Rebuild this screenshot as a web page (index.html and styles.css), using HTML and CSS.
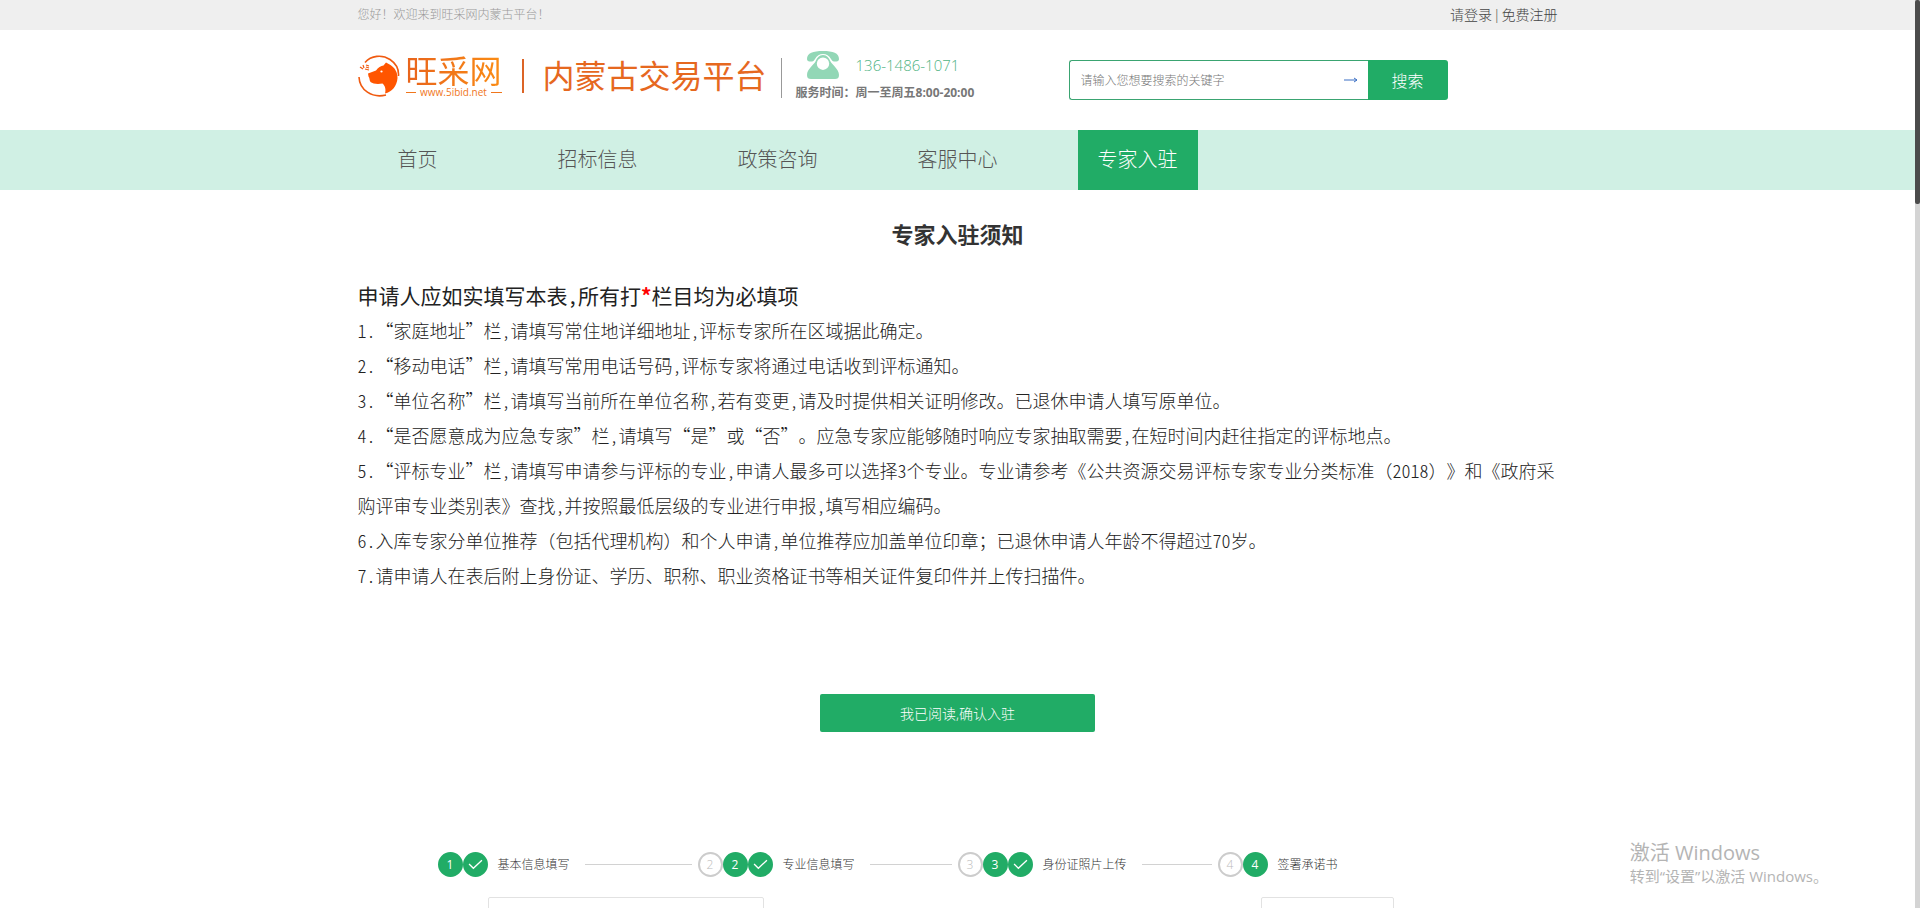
FILE: index.html
```html
<!DOCTYPE html>
<html lang="zh-CN">
<head>
<meta charset="utf-8">
<title>专家入驻 - 旺采网内蒙古交易平台</title>
<link rel="stylesheet" href="styles.css">
</head>
<body>
<div class="page">
  <div class="topbar">
    <div class="wrap topbar-row">
      <span class="welcome">您好！欢迎来到旺采网内蒙古平台！</span>
      <span class="account"><a href="#">请登录</a><span>|</span><a href="#">免费注册</a></span>
    </div>
  </div>

  <header class="wrap header">
    <a class="logo" href="#">
      <svg class="logo-mark" viewBox="0 0 42 42" aria-hidden="true">
        <g fill="none" stroke="#f05a10" stroke-width="1.6">
          <path d="M7 7.5C13 .5 24-.8 32 4.5C38 8.500 41 14 40.500 21"/>
          <path d="M1 22C1.500 35 14 43.500 28 40"/>
        </g>
        <path fill="#ff5500" d="M10 18.500L18 15.500C20 12.500 23 11 25.500 10.500L28 7.500L32.500 10C37 13 39.500 17 39.500 23C39 31 34 37 27 38.500C28 35 27.500 31 24.500 28.500C20 29.500 15 29 12.500 27C11 25 12 23 10.500 21.500Z"/>
        <circle cx="23.500" cy="16.500" r="1.100" fill="#fff"/>
        <path d="M2 12l3 2M5 10l1 3M8 10l3 1M7 14l4 1M8 12l3 1" stroke="#f05a10" stroke-width="1.200" fill="none"/>
      </svg>
      <span class="logo-words">
        <span class="logo-name">旺采网</span>
        <span class="logo-url">www.5ibid.net</span>
      </span>
    </a>
    <span class="logo-bar"></span>
    <span class="platform">内蒙古交易平台</span>
    <span class="header-rule"></span>
    <div class="contact">
      <div class="phone">
        <svg class="phone-icon" viewBox="0 0 32 28" aria-hidden="true">
          <path fill="#92d7b6" d="M0 8C0 2 6 0 16 0S32 2 32 8C32 9.500 31 10.500 29.500 10.500H27C25.500 10.500 25 9.500 24 8C22 4.500 19.500 3 16 3S10 4.500 8 8C7 9.500 6.500 10.500 5 10.500H2.500C1 10.500 0 9.500 0 8Z"/>
          <path fill="#92d7b6" fill-rule="evenodd" d="M16 4C20 4 22 7 23.500 10.500C25 13.500 32 18 32 24C32 27 30.500 28 28 28H4C1.500 28 0 27 0 24C0 18 7 13.500 8.500 10.500C10 7 12 4 16 4ZM16 6.500A6.200 6.200 0 1 0 16 18.900A6.200 6.200 0 1 0 16 6.500Z"/>
        </svg>
        <span class="phone-number">136-1486-1071</span>
      </div>
      <div class="hours">服务时间：周一至周五8:00-20:00</div>
    </div>
    <form class="search">
      <div class="search-box">
        <input class="search-input" type="text" aria-label="搜索关键字" placeholder="请输入您想要搜索的关键字">
        <svg class="search-arrow" viewBox="0 0 14 6" aria-hidden="true"><path d="M0 3H13M10 1L13 3L10 5" fill="none" stroke="#3a6fc4" stroke-width="1"/></svg>
      </div>
      <button class="search-button" type="button">搜索</button>
    </form>
  </header>

  <nav class="nav">
    <div class="wrap nav-row">
      <a class="nav-item" href="#">首页</a>
      <a class="nav-item" href="#">招标信息</a>
      <a class="nav-item" href="#">政策咨询</a>
      <a class="nav-item" href="#">客服中心</a>
      <a class="nav-item active" href="#">专家入驻</a>
    </div>
  </nav>

  <main class="wrap main">
    <h1 class="title">专家入驻须知</h1>
    <section class="notice">
      <h2 class="notice-head">申请人应如实填写本表,所有打<span class="required">*</span>栏目均为必填项</h2>
      <p>1.“家庭地址”栏,请填写常住地详细地址,评标专家所在区域据此确定。</p>
      <p>2.“移动电话”栏,请填写常用电话号码,评标专家将通过电话收到评标通知。</p>
      <p>3.“单位名称”栏,请填写当前所在单位名称,若有变更,请及时提供相关证明修改。已退休申请人填写原单位。</p>
      <p>4.“是否愿意成为应急专家”栏,请填写“是”或“否”。应急专家应能够随时响应专家抽取需要,在短时间内赶往指定的评标地点。</p>
      <p>5.“评标专业”栏,请填写申请参与评标的专业,申请人最多可以选择3个专业。专业请参考《公共资源交易评标专家专业分类标准<span class="full">（</span>2018<span class="full">）</span>》和《政府采购评审专业类别表》查找,并按照最低层级的专业进行申报,填写相应编码。</p>
      <p>6.入库专家分单位推荐<span class="full">（包括代理机构）</span>和个人申请,单位推荐应加盖单位印章；已退休申请人年龄不得超过70岁。</p>
      <p>7.请申请人在表后附上身份证、学历、职称、职业资格证书等相关证件复印件并上传扫描件。</p>
    </section>
    <button class="confirm" type="button">我已阅读,确认入驻</button>

    <ol class="steps">
      <li class="step">
        <span class="dot on">1</span><span class="dot on"><svg class="tick" viewBox="0 0 14 10"><path d="M1 4.500L5 8.500L13 1"/></svg></span>
        <span class="step-name">基本信息填写</span><span class="step-line"></span>
      </li>
      <li class="step">
        <span class="dot">2</span><span class="dot on">2</span><span class="dot on"><svg class="tick" viewBox="0 0 14 10"><path d="M1 4.500L5 8.500L13 1"/></svg></span>
        <span class="step-name">专业信息填写</span><span class="step-line"></span>
      </li>
      <li class="step">
        <span class="dot">3</span><span class="dot on">3</span><span class="dot on"><svg class="tick" viewBox="0 0 14 10"><path d="M1 4.500L5 8.500L13 1"/></svg></span>
        <span class="step-name">身份证照片上传</span><span class="step-line"></span>
      </li>
      <li class="step">
        <span class="dot">4</span><span class="dot on">4</span>
        <span class="step-name">签署承诺书</span>
      </li>
    </ol>
    <div class="form-row">
      <input class="field" type="text" aria-label="姓名">
      <div class="photo"></div>
    </div>
  </main>
</div>
<div class="scroll-track"><div class="scroll-thumb"></div></div>
<div class="watermark">
  <div class="watermark-title">激活 Windows</div>
  <div class="watermark-text">转到“设置”以激活 Windows。</div>
</div>
</body>
</html>
```
FILE: styles.css
```css
* { box-sizing: border-box; }

body {
  margin: 0;
  display: flex;
  height: 100vh;
  overflow: hidden;
  background: #fff;
  color: #333;
  font-family: "Open Sans", "Noto Sans CJK SC", sans-serif;
  font-weight: 300;
  font-size: 12px;
}

a { color: inherit; text-decoration: none; }
p, h1, h2, ol { margin: 0; padding: 0; }
button, input { font-family: inherit; font-weight: inherit; }

.page { flex: 1; min-width: 0; overflow: hidden; }
.wrap { width: 100%; max-width: 1200px; margin: 0 auto; }

.topbar { background: #efefef; }
.topbar-row { display: flex; justify-content: space-between; line-height: 30px; }
.welcome { color: #999; }
.account { display: flex; gap: 1px; font-size: 14px; color: #444; }

.header { display: flex; align-items: center; height: 100px; padding-bottom: 8px; }
.logo { display: flex; align-items: center; gap: 6px; }
.logo-mark { width: 42px; height: 42px; }
.logo-words { display: flex; flex-direction: column; }
.logo-name {
  font-size: 32px;
  line-height: 32px;
  font-weight: 400;
  color: transparent;
  background: linear-gradient(90deg, #e8641c, #fb8c14);
  background-clip: text;
}
.logo-url {
  display: flex;
  align-items: center;
  justify-content: space-between;
  gap: 4px;
  font-size: 10px;
  line-height: 10px;
  font-weight: 400;
  color: #f0761c;
}
.logo-url::before, .logo-url::after { content: ""; flex: 1; height: 1px; background: #f0761c; }
.logo-bar { width: 2px; height: 34px; margin: 0 19px 0 20px; background: #dc6426; }
.platform { font-size: 32px; line-height: 40px; font-weight: 400; color: #e6681f; }
.header-rule { width: 1px; height: 40px; margin: 4px 14px 0 14px; background: #999; }
.contact { display: flex; flex-direction: column; gap: 5px; }
.phone { display: flex; align-items: center; gap: 17px; padding-left: 11px; }
.phone-icon { width: 32px; height: 28px; }
.phone-number { font-size: 15px; line-height: 20px; color: #4fb383; }
.hours { font-weight: 700; line-height: 18px; color: #777; }

.search { display: flex; width: 379px; height: 40px; margin: 8px 110px 0 auto; }
.search-box {
  flex: 1;
  display: flex;
  align-items: center;
  padding: 0 10px 0 11px;
  border: 1px solid #3aa471;
  border-right: 0;
  border-radius: 3px 0 0 3px;
}
.search-input { flex: 1; min-width: 0; padding: 0; border: 0; outline: 0; background: none; font-size: 12px; color: #555; }
.search-input::placeholder { color: #777; opacity: 1; }
.search-arrow { width: 14px; height: 6px; }
.search-button { width: 80px; border: 0; border-radius: 0 3px 3px 0; background: #21ac66; color: #fff; font-size: 16px; }

.nav { background: #d0f0e4; }
.nav-row { display: flex; gap: 60px; }
.nav-item { width: 120px; text-align: center; font-size: 20px; line-height: 60px; color: #555; }
.nav-item.active { background: #21ac66; color: #fff; }

.main { padding-top: 29px; }
.title { text-align: center; font-size: 22px; line-height: 30px; font-weight: 700; }
.notice {
  padding-top: 29px;
  font-family: "Noto Sans CJK SC", sans-serif;
  font-size: 18px;
  line-height: 35px;
  color: #222;
  text-spacing-trim: space-all;
  font-feature-settings: "hwid";
}
.notice-head { font-size: 21px; line-height: 35px; font-weight: 400; }
.full { font-feature-settings: normal; }
.required { color: #f00; font-weight: 700; }
.confirm {
  display: block;
  width: 275px;
  height: 38px;
  margin: 101px auto 120px;
  border: 0;
  border-radius: 2px;
  background: #21ac66;
  color: #fff;
  font-size: 14px;
}

.steps { display: flex; padding-left: 80px; list-style: none; }
.step { display: flex; align-items: center; width: 260px; }
.dot {
  display: flex;
  align-items: center;
  justify-content: center;
  width: 25px;
  height: 25px;
  border: 2px solid #ccc;
  border-radius: 50%;
  color: #bbb;
  font-size: 12px;
}
.dot.on { border-color: #21ac66; background: #21ac66; color: #fff; font-weight: 400; }
.tick { width: 15px; height: 11px; fill: none; stroke: #fff; stroke-width: 1.2; }
.step-name { padding: 0 15px 0 10px; line-height: 24px; }
.step-line { flex: 1; height: 1px; margin-right: 6px; background: #d2d2d2; }

.form-row { display: flex; justify-content: space-between; padding: 20px 164px 0 130px; }
.field { width: 276px; height: 38px; border: 1px solid #e2e2e2; border-radius: 2px; }
.photo { width: 133px; height: 160px; border: 1px solid #e2e2e2; border-radius: 2px; }

.scroll-track { width: 5px; background: #d4d4d4; }
.scroll-thumb { height: 204px; border-radius: 2px; background: #4b4b4b; }

.watermark { position: absolute; right: 92px; bottom: 22px; color: #b4b4b4; font-weight: 400; }
.watermark-title { font-size: 20px; line-height: 26px; }
.watermark-text { font-size: 15px; line-height: 20px; }
```
